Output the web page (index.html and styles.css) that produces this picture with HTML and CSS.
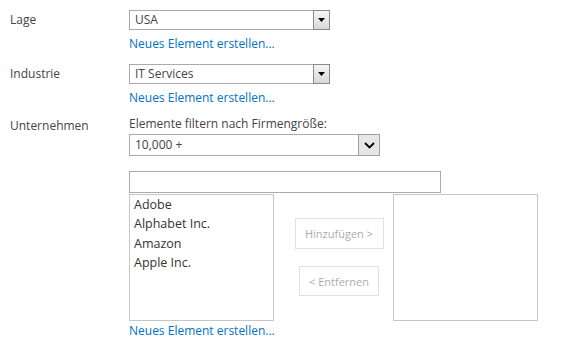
FILE: index.html
```html
<!DOCTYPE html>
<html lang="de">
<head>
<meta charset="utf-8">
<title>Formular</title>
<link rel="stylesheet" href="styles.css">
</head>
<body>
<div class="form">
  <div class="row row-lage">
    <div class="label">Lage</div>
    <div class="field">
      <div class="select classic">
        <span class="value">USA</span>
        <span class="btn-classic"><svg width="7" height="4" viewBox="0 0 7 4"><path d="M0 0h7L3.5 4z" fill="#000"/></svg></span>
      </div>
      <a class="link" href="#">Neues Element erstellen...</a>
    </div>
  </div>
  <div class="row row-industrie">
    <div class="label">Industrie</div>
    <div class="field">
      <div class="select classic">
        <span class="value">IT Services</span>
        <span class="btn-classic"><svg width="7" height="4" viewBox="0 0 7 4"><path d="M0 0h7L3.5 4z" fill="#000"/></svg></span>
      </div>
      <a class="link" href="#">Neues Element erstellen...</a>
    </div>
  </div>
  <div class="row row-unternehmen">
    <div class="label">Unternehmen</div>
    <div class="field">
      <div class="filter-label">Elemente filtern nach Firmengröße:</div>
      <div class="select modern">
        <span class="value">10,000 +</span>
        <span class="btn-modern"><svg width="11" height="7" viewBox="0 0 11 7"><path d="M1 1l4.5 4.5L10 1" fill="none" stroke="#000" stroke-width="1.8"/></svg></span>
      </div>
      <div class="textbox"></div>
      <div class="picker">
        <div class="listbox">
          <div class="item">Adobe</div>
          <div class="item">Alphabet Inc.</div>
          <div class="item">Amazon</div>
          <div class="item">Apple Inc.</div>
        </div>
        <div class="actions">
          <button class="action add" disabled>Hinzufügen &gt;</button>
          <button class="action remove" disabled>&lt; Entfernen</button>
        </div>
        <div class="listbox"></div>
      </div>
      <a class="link link-last" href="#">Neues Element erstellen...</a>
    </div>
  </div>
</div>
</body>
</html>
```
FILE: styles.css
```css
html, body {
  margin: 0;
  padding: 0;
  background: #fff;
}
body {
  font-family: "Open Sans", "Noto Sans", sans-serif;
  font-size: 12px;
  color: #444;
}
.form {
  display: flex;
  flex-direction: column;
  padding: 10px 0 0 10px;
}
.row {
  display: flex;
}
.label {
  width: 119px;
  flex: none;
  line-height: 20px;
  color: #444;
}
.field {
  display: flex;
  flex-direction: column;
  align-items: flex-start;
}
.row-industrie {
  margin-top: 12px;
}
.row-unternehmen {
  margin-top: 10px;
}
.select {
  display: flex;
  align-items: stretch;
  box-sizing: border-box;
  border: 1px solid #ababab;
  background: #fff;
}
.select .value {
  flex: 1;
  padding-left: 5px;
  color: #444;
}
.classic {
  width: 201px;
  height: 20px;
  line-height: 18px;
}
.btn-classic {
  width: 15px;
  margin: -1px -1px -1px 0;
  border: 1px solid #8a8a8a;
  background: linear-gradient(#f6f6f6, #d8d8d8);
  display: flex;
  align-items: center;
  justify-content: center;
}
.link {
  color: #0072c6;
  text-decoration: none;
  line-height: 17px;
  margin-top: 5px;
}
.filter-label {
  line-height: 16px;
  color: #444;
}
.modern {
  width: 251px;
  height: 22px;
  line-height: 20px;
  margin-top: 2px;
}
.btn-modern {
  width: 20px;
  margin: -1px -1px -1px 0;
  border: 1px solid #a0a0a0;
  background: #e6e6e6;
  display: flex;
  align-items: center;
  justify-content: center;
}
.textbox {
  width: 312px;
  height: 22px;
  box-sizing: border-box;
  border: 1px solid #ababab;
  margin-top: 15px;
}
.picker {
  display: flex;
  margin-top: 1px;
}
.listbox {
  width: 145px;
  height: 127px;
  box-sizing: border-box;
  border: 1px solid #c6c6c6;
  padding: 0 0 0 4px;
}
.item {
  font-size: 12.5px;
  line-height: 19.4px;
  color: #333;
}
.actions {
  width: 119px;
  display: flex;
  flex-direction: column;
  align-items: center;
  padding-top: 24px;
  padding-left: 11px;
  box-sizing: border-box;
}
.action {
  font-family: inherit;
  font-size: 11px;
  color: #acacac;
  background: #fff;
  border: 1px solid #e1e1e1;
  padding: 0;
  height: 31px;
}
.action.add {
  width: 89px;
}
.action.remove {
  width: 80px;
  height: 30px;
  margin-top: 17px;
}
.link-last {
  margin-top: 1px;
}
```
